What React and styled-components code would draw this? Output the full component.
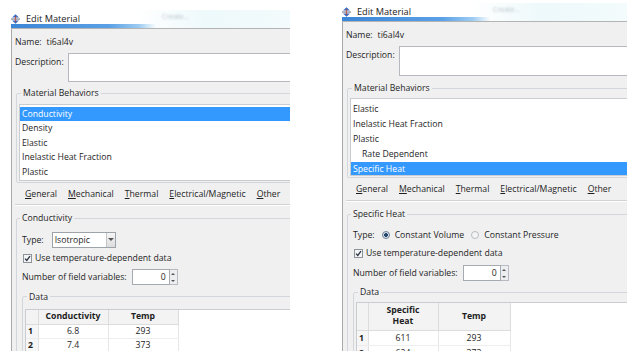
import React from "react";
import styled, { createGlobalStyle } from "styled-components";

const GlobalStyle = createGlobalStyle`
  html, body { margin: 0; padding: 0; background: #fff; }
  body {
    font-family: "Open Sans", "Noto Sans", sans-serif;
    font-size: 8.7px;
    color: #1e1e1e;
  }
  * { box-sizing: border-box; }
`;

const Stage = styled.div`
  display: flex;
  align-items: flex-start;
  width: 632px;
  height: 351px;
  overflow: hidden;
  background: #fff;
`;

const Win = styled.div`
  flex: none;
  margin-left: ${(p) => p.$left}px;
  margin-top: ${(p) => p.$top}px;
  width: ${(p) => p.$width}px;
  height: ${(p) => 351 - p.$top}px;
  display: flex;
  flex-direction: column;
  overflow: hidden;
`;

const TitleBar = styled.div`
  flex: none;
  height: 19px;
  display: flex;
  align-items: center;
  gap: 6px;
  font-size: 9.2px;
  color: #1a1a1a;
  border-bottom: 1px solid #b4b4b4;
  background:
    linear-gradient(to right, #3b86d6 0, #5aa0e6 35%, #9fcdf2 46%, rgba(255, 255, 255, 0) 52%) left bottom / 100% 4px no-repeat,
    linear-gradient(to right, #ffffff 0, #ffffff 45%, #eef9fb 70%, #f3fbfc 100%);
`;

const TitleText = styled.span`
  padding-bottom: 2px;
`;

const Ghost = styled.span`
  margin-left: 76px;
  margin-bottom: 6px;
  color: #b9c4cf;
  font-size: 7px;
  filter: blur(0.8px);
`;

const Body = styled.div`
  flex: 1;
  min-height: 0;
  background: #f0f0f0;
  border-left: 1px solid #a9a9a9;
  padding-left: 3px;
  display: flex;
  flex-direction: column;
`;

const NameRow = styled.div`
  flex: none;
  height: 24px;
  padding-top: 7px;
  line-height: 12px;
  display: flex;
  gap: 5px;
`;

const DescRow = styled.div`
  flex: none;
  height: ${(p) => p.$h}px;
  display: flex;
`;

const DescLabel = styled.div`
  flex: none;
  width: 53px;
  padding-top: 3px;
  line-height: 12px;
`;

const TextBox = styled.div`
  flex: 1;
  margin-right: -4px;
  background: #fff;
  border: 1px solid #b5b8be;
`;

const Group = styled.fieldset`
  flex: none;
  min-width: 0;
  margin: ${(p) => p.$mt}px -8px 0 ${(p) => p.$ml}px;
  padding: ${(p) => p.$pt}px 0 ${(p) => p.$pb}px ${(p) => p.$pl}px;
  border: 1px solid #d3d6da;
  border-radius: 2px;
  display: flex;
  flex-direction: column;
`;

const Legend = styled.legend`
  margin-left: ${(p) => p.$ml}px;
  padding: 0 2px;
  line-height: 12px;
  height: 12px;
`;

const List = styled.div`
  height: ${(p) => p.$h}px;
  padding-top: ${(p) => p.$pt}px;
  background: #fff;
  border: 1px solid #c9ccd1;
  border-right: none;
  overflow: hidden;
`;

const ListItem = styled.div`
  height: ${(p) => p.$h}px;
  line-height: ${(p) => p.$h}px;
  padding-left: ${(p) => (p.$indent ? 11 : 2)}px;
  white-space: nowrap;
  background: ${(p) => (p.$selected ? "#3399ff" : "transparent")};
  color: ${(p) => (p.$selected ? "#fff" : "#1e1e1e")};
`;

const MenuBar = styled.div`
  flex: none;
  height: ${(p) => p.$h}px;
  display: flex;
  align-items: center;
  gap: 11px;
  padding-left: 10px;
  white-space: nowrap;
`;

const Key = styled.span`
  text-decoration: underline;
  text-underline-offset: 1px;
`;

const Separator = styled.div`
  flex: none;
  height: 2px;
  border-top: 1px solid #d2d2d2;
  border-bottom: 1px solid #ffffff;
  margin-right: -4px;
`;

const Row = styled.div`
  flex: none;
  display: flex;
  align-items: center;
  height: ${(p) => p.$h}px;
  margin-top: ${(p) => p.$mt}px;
  padding-left: 1px;
  gap: ${(p) => p.$gap || 4}px;
  white-space: nowrap;
`;

const Combo = styled.div`
  width: 64px;
  height: 16px;
  margin-left: 4px;
  display: flex;
  align-items: center;
  background: #fff;
  border: 1px solid #9ea3aa;
  padding-left: 2px;
`;

const ComboText = styled.span`
  flex: 1;
`;

const ComboButton = styled.span`
  width: 9px;
  height: 14px;
  display: flex;
  align-items: center;
  justify-content: center;
  background: linear-gradient(#f6f6f6, #dcdcdc);
  border-left: 1px solid #c4c4c4;
`;

const Radio = styled.span`
  width: 8px;
  height: 8px;
  border-radius: 50%;
  border: 1px solid ${(p) => (p.$on ? "#6f7f90" : "#b6bcc3")};
  background: ${(p) => (p.$on ? "radial-gradient(circle, #27466b 0 1.6px, #d9e4ef 2.2px)" : "#f4f5f6")};
  margin: 0 1px 0 ${(p) => p.$ml || 0}px;
  flex: none;
`;

const Check = styled.span`
  width: 9px;
  height: 9px;
  flex: none;
  margin-left: 1px;
  border: 1px solid #8e939a;
  background: #f2f4f6;
  display: flex;
  align-items: center;
  justify-content: center;
`;

const Spin = styled.div`
  display: flex;
  height: 16px;
  margin-left: 1px;
`;

const SpinInput = styled.div`
  width: 38px;
  height: 16px;
  background: #fff;
  border: 1px solid #a6abb2;
  text-align: right;
  padding-right: 3px;
  line-height: 14px;
`;

const SpinButtons = styled.div`
  width: 8px;
  height: 16px;
  display: flex;
  flex-direction: column;
  border: 1px solid #b8bcc2;
  border-left: none;
  background: #eceef0;
`;

const SpinHalf = styled.span`
  flex: 1;
  display: flex;
  align-items: center;
  justify-content: center;
`;

const TableFrame = styled.div`
  background: #fff;
  border-top: 1px solid #c9ccd0;
  border-left: 1px solid #c9ccd0;
  margin-right: -10px;
  height: 60px;
`;

const Grid = styled.table`
  border-collapse: collapse;
  table-layout: fixed;
`;

const HeadCell = styled.th`
  width: ${(p) => p.$w}px;
  height: ${(p) => p.$h}px;
  padding: 0;
  background: #f3f3f3;
  font-weight: 700;
  line-height: 11px;
  text-align: center;
  vertical-align: middle;
  border-right: 1px solid #dcdcdc;
  border-bottom: 1px solid #dcdcdc;
`;

const NumCell = styled.td`
  height: ${(p) => p.$h}px;
  padding: 0 0 0 2px;
  font-weight: 700;
  background: #f6f6f6;
  border-right: 1px solid #e0e0e0;
  border-bottom: 1px solid #ececec;
`;

const Cell = styled.td`
  height: ${(p) => p.$h}px;
  padding: 0;
  text-align: center;
  border-right: 1px solid #e6e6e6;
  border-bottom: 1px solid #eeeeee;
`;

const MaterialIcon = () => (
  <svg width="9" height="10" viewBox="0 0 9 10">
    <path d="M4.5 0.3 L8 3.6 H1 Z" fill="#3b6fc4" />
    <path d="M4.5 9.7 L8 6.4 H1 Z" fill="#3b6fc4" />
    <rect x="0" y="4.4" width="9" height="1.3" fill="#8a8f99" />
    <rect x="3.9" y="2" width="1.2" height="6" fill="#c0392b" opacity="0.7" />
  </svg>
);

const CheckMark = () => (
  <svg width="7" height="7" viewBox="0 0 7 7">
    <path d="M1 3.6 L2.8 5.4 L6 1.2" fill="none" stroke="#2a3340" strokeWidth="1.3" />
  </svg>
);

const Arrow = ({ up, size = 3 }) => (
  <svg width={size * 2} height={size} viewBox="0 0 6 3">
    <path d={up ? "M0 3 L3 0 L6 3 Z" : "M0 0 L6 0 L3 3 Z"} fill="#555" />
  </svg>
);

const menus = [
  ["G", "eneral"],
  ["M", "echanical"],
  ["T", "hermal"],
  ["E", "lectrical/Magnetic"],
  ["O", "ther"],
];

const MaterialWindow = ({ cfg }) => {
  const m = cfg.m;
  return (
    <Win $left={cfg.left} $top={cfg.top} $width={cfg.width}>
      <TitleBar>
        <MaterialIcon />
        <TitleText>Edit Material</TitleText>
        <Ghost>Create...</Ghost>
      </TitleBar>
      <Body>
        <NameRow>
          <span>Name:</span>
          <span>ti6al4v</span>
        </NameRow>
        <DescRow $h={m.descH}>
          <DescLabel>Description:</DescLabel>
          <TextBox />
        </DescRow>
        <Group $mt={m.mbTop} $ml={1} $pt={m.mbPadTop} $pb={1} $pl={2}>
          <Legend $ml={2}>Material Behaviors</Legend>
          <List $h={m.listH} $pt={m.listPadTop}>
            {cfg.behaviors.map((b, i) => (
              <ListItem key={b.label} $h={m.rowH} $indent={b.indent} $selected={i === cfg.selected}>
                {b.label}
              </ListItem>
            ))}
          </List>
        </Group>
        <MenuBar $h={m.menuH}>
          {menus.map(([k, rest]) => (
            <span key={k}>
              <Key>{k}</Key>
              {rest}
            </span>
          ))}
        </MenuBar>
        <Separator />
        <Group $mt={m.secTop} $ml={1} $pt={0} $pb={0} $pl={4}>
          <Legend $ml={-1}>{cfg.section}</Legend>
          <Row $h={m.typeH} $mt={m.typeTop}>
            <span>Type:</span>
            {cfg.type === "combo" ? (
              <Combo>
                <ComboText>Isotropic</ComboText>
                <ComboButton>
                  <Arrow />
                </ComboButton>
              </Combo>
            ) : (
              <>
                <Radio $on $ml={3} />
                <span>Constant Volume</span>
                <Radio $ml={3} />
                <span>Constant Pressure</span>
              </>
            )}
          </Row>
          <Row $h={14} $mt={m.chkTop} $gap={3}>
            <Check>
              <CheckMark />
            </Check>
            <span>Use temperature-dependent data</span>
          </Row>
          <Row $h={18} $mt={m.numTop}>
            <span>Number of field variables:</span>
            <Spin>
              <SpinInput>0</SpinInput>
              <SpinButtons>
                <SpinHalf>
                  <Arrow up size={2} />
                </SpinHalf>
                <SpinHalf>
                  <Arrow size={2} />
                </SpinHalf>
              </SpinButtons>
            </Spin>
          </Row>
          <Group $mt={m.dataTop} $ml={1} $pt={m.tableTop} $pb={0} $pl={2}>
            <Legend $ml={2}>Data</Legend>
            <TableFrame>
              <Grid>
                <thead>
                  <tr>
                    <HeadCell $w={cfg.cols[0]} $h={m.headH} />
                    {cfg.headers.map((h, i) => (
                      <HeadCell key={i} $w={cfg.cols[i + 1]} $h={m.headH}>
                        {h.map((line, j) => (
                          <div key={j}>{line}</div>
                        ))}
                      </HeadCell>
                    ))}
                  </tr>
                </thead>
                <tbody>
                  {cfg.rows.map((r, i) => (
                    <tr key={i}>
                      <NumCell $h={m.bodyH}>{i + 1}</NumCell>
                      {r.map((v, j) => (
                        <Cell key={j} $h={m.bodyH}>
                          {v}
                        </Cell>
                      ))}
                    </tr>
                  ))}
                </tbody>
              </Grid>
            </TableFrame>
          </Group>
        </Group>
      </Body>
    </Win>
  );
};

const leftCfg = {
  left: 11,
  top: 10,
  width: 279,
  behaviors: [
    { label: "Conductivity" },
    { label: "Density" },
    { label: "Elastic" },
    { label: "Inelastic Heat Fraction" },
    { label: "Plastic" },
  ],
  selected: 0,
  section: "Conductivity",
  type: "combo",
  headers: [["Conductivity"], ["Temp"]],
  rows: [
    ["6.8", "293"],
    ["7.4", "373"],
  ],
  cols: [12, 70, 70],
  m: {
    descH: 29, mbTop: 5, mbPadTop: 5, listH: 77, listPadTop: 1.5, rowH: 14.5,
    menuH: 21, secTop: 6, typeTop: 7, typeH: 17, chkTop: 3, numTop: 3,
    dataTop: 4.5, tableTop: 6.5, headH: 14, bodyH: 14,
  },
};

const rightCfg = {
  left: 52,
  top: 3,
  width: 285,
  behaviors: [
    { label: "Elastic" },
    { label: "Inelastic Heat Fraction" },
    { label: "Plastic" },
    { label: "Rate Dependent", indent: true },
    { label: "Specific Heat" },
  ],
  selected: 4,
  section: "Specific Heat",
  type: "radio",
  headers: [["Specific", "Heat"], ["Temp"]],
  rows: [
    ["611", "293"],
    ["624", "373"],
  ],
  cols: [11, 70, 72],
  m: {
    descH: 30, mbTop: 6, mbPadTop: 4, listH: 78, listPadTop: 2.5, rowH: 15,
    menuH: 22, secTop: 6, typeTop: 7, typeH: 16, chkTop: 3, numTop: 4,
    dataTop: 4, tableTop: 4, headH: 27, bodyH: 15,
  },
};

export default function App() {
  return (
    <>
      <GlobalStyle />
      <Stage>
        <MaterialWindow cfg={leftCfg} />
        <MaterialWindow cfg={rightCfg} />
      </Stage>
    </>
  );
}
